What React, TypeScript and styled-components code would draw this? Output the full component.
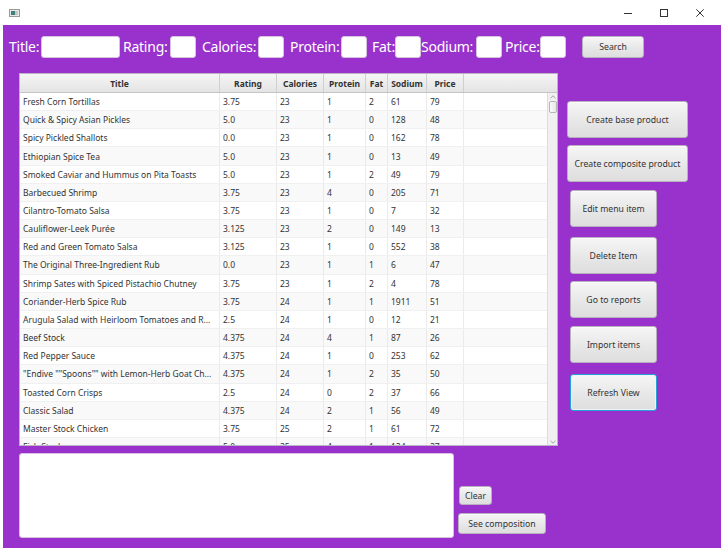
import React from "react";
import styled, { createGlobalStyle } from "styled-components";

const GlobalStyle = createGlobalStyle`
  html, body { margin: 0; padding: 0; background: #ffffff; }
  body { font-family: "Noto Sans", "Open Sans", sans-serif; }
  * { box-sizing: border-box; }
`;

const Screen = styled.div`
  width: 724px;
  height: 555px;
  background: #ffffff;
  overflow: hidden;
  display: flex;
  flex-direction: column;
`;

const TitleBar = styled.div`
  height: 25px;
  flex: none;
  display: flex;
  align-items: center;
  justify-content: space-between;
  padding: 0 20px 0 9px;
`;

const WinControls = styled.div`
  display: flex;
  align-items: center;
  gap: 28px;
`;

const Stage = styled.div`
  margin: 0 3px;
  height: 523px;
  background: #9932cc;
  display: flex;
  flex-direction: column;
`;

const TopBar = styled.div`
  display: flex;
  align-items: center;
  height: 22px;
  margin: 11px 0 0 6px;
`;

const FieldLabel = styled.span<{ $w: number; $ml?: number }>`
  width: ${(p) => p.$w}px;
  margin-left: ${(p) => p.$ml ?? 0}px;
  flex: none;
  color: #ffffff;
  font-size: 14px;
  letter-spacing: -0.25px;
  white-space: nowrap;
  line-height: 22px;
`;

const FieldInput = styled.input<{ $w: number }>`
  width: ${(p) => p.$w}px;
  height: 22px;
  flex: none;
  border: 1px solid #d6c2e0;
  border-radius: 3px;
  background: #ffffff;
  padding: 0 4px;
  outline: none;
`;

const FxButton = styled.button<{ $w: number; $h: number; $ml?: number; $mt?: number; $focused?: boolean }>`
  width: ${(p) => p.$w}px;
  height: ${(p) => p.$h}px;
  margin-left: ${(p) => p.$ml ?? 0}px;
  margin-top: ${(p) => p.$mt ?? 0}px;
  flex: none;
  padding: 0;
  font-family: "Noto Sans", "Open Sans", sans-serif;
  font-size: 8.7px;
  color: #333333;
  border-radius: 3px;
  border: 1px solid ${(p) => (p.$focused ? "#2a9fd6" : "#b9b0bf")};
  box-shadow: ${(p) => (p.$focused ? "inset 0 0 0 1px #e9f5fb" : "inset 0 1px 0 #fbfbfb")};
  background: linear-gradient(#f6f6f6, #e6e6e6 60%, #dedede);
  display: flex;
  align-items: center;
  justify-content: center;
  white-space: nowrap;
`;

const MainRow = styled.div`
  display: flex;
  margin-top: 15px;
  padding-left: 16px;
`;

const Table = styled.div`
  width: 539px;
  height: 373px;
  background: #ffffff;
  border: 1px solid #bdb3c4;
  display: flex;
  flex-direction: column;
  overflow: hidden;
`;

const HeaderRow = styled.div`
  display: flex;
  height: 19px;
  flex: none;
  background: linear-gradient(#f5f5f5, #e4e4e4);
  border-bottom: 1px solid #c4c4c4;
`;

const HeaderCell = styled.div<{ $w: number; $grow?: boolean }>`
  width: ${(p) => p.$w}px;
  flex: ${(p) => (p.$grow ? "1" : "none")};
  border-right: ${(p) => (p.$grow ? "none" : "1px solid #cfcfcf")};
  font-size: 8.5px;
  font-weight: bold;
  color: #333333;
  display: flex;
  align-items: center;
  justify-content: center;
  white-space: nowrap;
`;

const Body = styled.div`
  flex: 1;
  display: flex;
  min-height: 0;
`;

const Rows = styled.div`
  flex: 1;
  overflow: hidden;
`;

const Row = styled.div<{ $odd: boolean }>`
  display: flex;
  height: 18.17px;
  background: ${(p) => (p.$odd ? "#f9f9f9" : "#ffffff")};
  border-bottom: 1px solid #f0f0f0;
`;

const Cell = styled.div<{ $w: number; $grow?: boolean }>`
  width: ${(p) => p.$w}px;
  flex: ${(p) => (p.$grow ? "1" : "none")};
  border-right: ${(p) => (p.$grow ? "none" : "1px solid #ebebeb")};
  font-size: 8.5px;
  color: #333333;
  padding-left: 3px;
  display: flex;
  align-items: center;
  white-space: nowrap;
  overflow: hidden;
`;

const ScrollTrack = styled.div`
  width: 10px;
  flex: none;
  background: #f0f0f0;
  border-left: 1px solid #dddddd;
  display: flex;
  flex-direction: column;
  align-items: center;
  justify-content: space-between;
  padding: 2px 0 1px;
`;

const ScrollTop = styled.div`
  display: flex;
  flex-direction: column;
  align-items: center;
  gap: 2px;
`;

const Thumb = styled.div`
  width: 8px;
  height: 12px;
  border: 1px solid #b5b5b5;
  border-radius: 2px;
  background: linear-gradient(90deg, #fafafa, #e8e8e8);
`;

const SideColumn = styled.div`
  display: flex;
  flex-direction: column;
  align-items: flex-start;
  padding-top: 28px;
  margin-left: 9px;
`;

const BottomRow = styled.div`
  display: flex;
  margin-top: 7px;
  padding-left: 16px;
`;

const Notes = styled.textarea`
  width: 435px;
  height: 85px;
  flex: none;
  border: 1px solid #d6c2e0;
  border-radius: 3px;
  background: #ffffff;
  resize: none;
  outline: none;
`;

const BottomButtons = styled.div`
  display: flex;
  flex-direction: column;
  align-items: flex-start;
  padding-top: 33px;
  margin-left: 4px;
`;

type Item = [string, string, number, number, number, number, number];

const items: Item[] = [
  ["Fresh Corn Tortillas", "3.75", 23, 1, 2, 61, 79],
  ["Quick & Spicy Asian Pickles", "5.0", 23, 1, 0, 128, 48],
  ["Spicy Pickled Shallots", "0.0", 23, 1, 0, 162, 78],
  ["Ethiopian Spice Tea", "5.0", 23, 1, 0, 13, 49],
  ["Smoked Caviar and Hummus on Pita Toasts", "5.0", 23, 1, 2, 49, 79],
  ["Barbecued Shrimp", "3.75", 23, 4, 0, 205, 71],
  ["Cilantro-Tomato Salsa", "3.75", 23, 1, 0, 7, 32],
  ["Cauliflower-Leek Purée", "3.125", 23, 2, 0, 149, 13],
  ["Red and Green Tomato Salsa", "3.125", 23, 1, 0, 552, 38],
  ["The Original Three-Ingredient Rub", "0.0", 23, 1, 1, 6, 47],
  ["Shrimp Sates with Spiced Pistachio Chutney", "3.75", 23, 1, 2, 4, 78],
  ["Coriander-Herb Spice Rub", "3.75", 24, 1, 1, 1911, 51],
  ["Arugula Salad with Heirloom Tomatoes and R...", "2.5", 24, 1, 0, 12, 21],
  ["Beef Stock", "4.375", 24, 4, 1, 87, 26],
  ["Red Pepper Sauce", "4.375", 24, 1, 0, 253, 62],
  ["\"Endive \"\"Spoons\"\" with Lemon-Herb Goat Ch...", "4.375", 24, 1, 2, 35, 50],
  ["Toasted Corn Crisps", "2.5", 24, 0, 2, 37, 66],
  ["Classic Salad", "4.375", 24, 2, 1, 56, 49],
  ["Master Stock Chicken", "3.75", 25, 2, 1, 61, 72],
  ["Fish Stock", "5.0", 25, 4, 1, 124, 27],
];

const columns: [string, number][] = [
  ["Title", 200],
  ["Rating", 57],
  ["Calories", 47],
  ["Protein", 42],
  ["Fat", 22],
  ["Sodium", 39],
  ["Price", 37],
];

const fields: { label: string; lw: number; ml: number; iw: number }[] = [
  { label: "Title:", lw: 32, ml: 0, iw: 79 },
  { label: "Rating:", lw: 47, ml: 3, iw: 26 },
  { label: "Calories:", lw: 56, ml: 6, iw: 26 },
  { label: "Protein:", lw: 51, ml: 6, iw: 26 },
  { label: "Fat:", lw: 23, ml: 5, iw: 26 },
  { label: "Sodium:", lw: 55, ml: 0, iw: 26 },
  { label: "Price:", lw: 35, ml: 3, iw: 26 },
];

const sideButtons: { text: string; w: number; ml: number; mt: number; focused?: boolean }[] = [
  { text: "Create base product", w: 121, ml: 0, mt: 0 },
  { text: "Create composite product", w: 121, ml: 0, mt: 7 },
  { text: "Edit menu item", w: 87, ml: 3, mt: 8 },
  { text: "Delete Item", w: 87, ml: 3, mt: 10 },
  { text: "Go to reports", w: 87, ml: 3, mt: 7 },
  { text: "Import items", w: 87, ml: 3, mt: 8 },
  { text: "Refresh View", w: 87, ml: 3, mt: 11, focused: true },
];

const AppIcon = () => (
  <svg width="11" height="8" viewBox="0 0 11 8">
    <rect x="0.5" y="0.5" width="10" height="7" fill="#e8e8e8" stroke="#9a9a9a" />
    <rect x="2" y="2" width="4" height="4" fill="#3f7f7a" />
    <rect x="6" y="2" width="3" height="4" fill="#bfc9c8" />
  </svg>
);

const Chevron = ({ down }: { down?: boolean }) => (
  <svg width="6" height="4" viewBox="0 0 6 4">
    <path d={down ? "M0.5 0.8 L3 3.2 L5.5 0.8" : "M0.5 3.2 L3 0.8 L5.5 3.2"} fill="none" stroke="#9a9a9a" strokeWidth="0.9" />
  </svg>
);

export default function App() {
  return (
    <Screen>
      <GlobalStyle />
      <TitleBar>
        <AppIcon />
        <WinControls>
          <svg width="8" height="8" viewBox="0 0 8 8">
            <path d="M0 4.5 H8" stroke="#333" strokeWidth="1" />
          </svg>
          <svg width="8" height="8" viewBox="0 0 8 8">
            <rect x="0.5" y="0.5" width="7" height="7" fill="none" stroke="#333" strokeWidth="1" />
          </svg>
          <svg width="8" height="8" viewBox="0 0 8 8">
            <path d="M0.3 0.3 L7.7 7.7 M7.7 0.3 L0.3 7.7" stroke="#333" strokeWidth="1" />
          </svg>
        </WinControls>
      </TitleBar>
      <Stage>
        <TopBar>
          {fields.map((f) => (
            <React.Fragment key={f.label}>
              <FieldLabel $w={f.lw} $ml={f.ml}>
                {f.label}
              </FieldLabel>
              <FieldInput $w={f.iw} />
            </React.Fragment>
          ))}
          <FxButton $w={62} $h={22} $ml={16}>
            Search
          </FxButton>
        </TopBar>
        <MainRow>
          <Table>
            <HeaderRow>
              {columns.map(([name, w]) => (
                <HeaderCell key={name} $w={w}>
                  {name}
                </HeaderCell>
              ))}
              <HeaderCell $w={0} $grow />
            </HeaderRow>
            <Body>
              <Rows>
                {items.map((it, i) => (
                  <Row key={i} $odd={i % 2 === 1}>
                    {it.map((v, j) => (
                      <Cell key={j} $w={columns[j][1]}>
                        {v}
                      </Cell>
                    ))}
                    <Cell $w={0} $grow />
                  </Row>
                ))}
              </Rows>
              <ScrollTrack>
                <ScrollTop>
                  <Chevron />
                  <Thumb />
                </ScrollTop>
                <Chevron down />
              </ScrollTrack>
            </Body>
          </Table>
          <SideColumn>
            {sideButtons.map((b) => (
              <FxButton key={b.text} $w={b.w} $h={37} $ml={b.ml} $mt={b.mt} $focused={b.focused}>
                {b.text}
              </FxButton>
            ))}
          </SideColumn>
        </MainRow>
        <BottomRow>
          <Notes />
          <BottomButtons>
            <FxButton $w={33} $h={19} $ml={1}>
              Clear
            </FxButton>
            <FxButton $w={88} $h={21} $mt={8}>
              See composition
            </FxButton>
          </BottomButtons>
        </BottomRow>
      </Stage>
    </Screen>
  );
}
